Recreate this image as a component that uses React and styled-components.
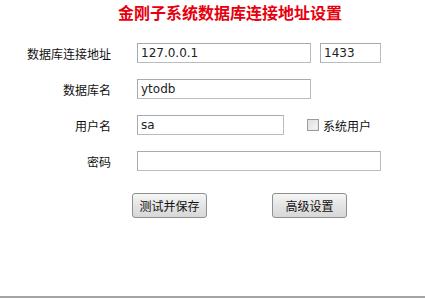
import React from 'react';
import styled, { createGlobalStyle } from 'styled-components';

const GlobalStyle = createGlobalStyle`
  html, body { margin: 0; padding: 0; background: #fff; }
  body { font-family: "Noto Sans CJK SC", "DejaVu Sans", sans-serif; }
`;

const Page = styled.div`
  box-sizing: border-box;
  width: 425px;
  height: 298px;
  background: #fff;
  border-bottom: 2px solid #a4a4a4;
  box-shadow: 0 1px 0 #d8d8d8;
  display: flex;
  flex-direction: column;
`;

const Title = styled.h1`
  margin: 0;
  padding-left: 35px;
  line-height: normal;
  text-align: center;
  font-size: 16px;
  font-weight: bold;
  color: #e6000e;
  font-family: "Noto Sans CJK SC", sans-serif;
`;

const Form = styled.div`
  margin-top: 19px;
  display: flex;
  flex-direction: column;
  gap: 16px;
`;

const Row = styled.div`
  display: flex;
  align-items: center;
  height: 20px;
`;

const Label = styled.label`
  width: 111px;
  margin-right: 26px;
  text-align: right;
  font-size: 12px;
  color: #111;
  white-space: nowrap;
`;

const Field = styled.input`
  box-sizing: border-box;
  width: ${p => p.$w}px;
  height: 20px;
  margin: 0 ${p => p.$after || 0}px 0 0;
  padding: 0 3px;
  border: 1px solid #b9bdc2;
  border-top-color: #a6abb2;
  border-left-color: #a6abb2;
  font-family: "DejaVu Sans", sans-serif;
  font-size: 12px;
  color: #222;
  background: #fff;
  outline: none;
`;

const Check = styled.span`
  box-sizing: border-box;
  width: 12px;
  height: 12px;
  margin-right: 4px;
  border: 1px solid #9c9c9c;
  box-shadow: inset 0 0 0 1px #e6e6e6;
  background: linear-gradient(135deg, #dcdcdc, #fafafa);
`;

const CheckText = styled.span`
  font-size: 12px;
  color: #111;
`;

const Buttons = styled.div`
  margin-top: 22px;
  padding-left: 132px;
  display: flex;
  gap: 65px;
`;

const Button = styled.button`
  box-sizing: border-box;
  width: 75px;
  height: 25px;
  padding: 0;
  border: 1px solid #8e8f8f;
  border-radius: 3px;
  background: linear-gradient(#f6f6f6, #e4e4e4 50%, #d8d8d8);
  font-family: "Noto Sans CJK SC", sans-serif;
  font-size: 12px;
  color: #111;
`;

export default function App() {
  return (
    <>
      <GlobalStyle />
      <Page>
        <Title>金刚子系统数据库连接地址设置</Title>
        <Form>
          <Row>
            <Label>数据库连接地址</Label>
            <Field $w={174} $after={9} defaultValue="127.0.0.1" />
            <Field $w={61} defaultValue="1433" />
          </Row>
          <Row>
            <Label>数据库名</Label>
            <Field $w={174} defaultValue="ytodb" />
          </Row>
          <Row>
            <Label>用户名</Label>
            <Field $w={147} $after={23} defaultValue="sa" />
            <Check />
            <CheckText>系统用户</CheckText>
          </Row>
          <Row>
            <Label>密码</Label>
            <Field $w={244} type="password" />
          </Row>
        </Form>
        <Buttons>
          <Button>测试并保存</Button>
          <Button>高级设置</Button>
        </Buttons>
      </Page>
    </>
  );
}
